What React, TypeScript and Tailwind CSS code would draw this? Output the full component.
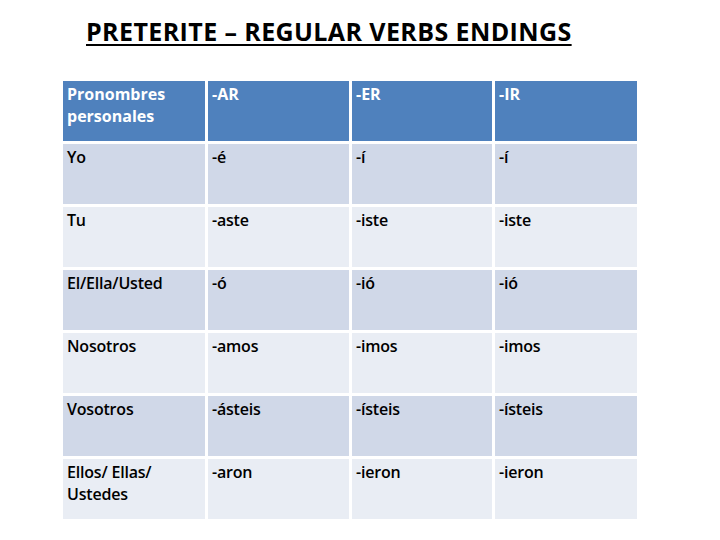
import React from "react";

const rows: string[][] = [
  ["Yo", "-é", "-í", "-í"],
  ["Tu", "-aste", "-iste", "-iste"],
  ["El/Ella/Usted", "-ó", "-ió", "-ió"],
  ["Nosotros", "-amos", "-imos", "-imos"],
  ["Vosotros", "-ásteis", "-ísteis", "-ísteis"],
  ["Ellos/ Ellas/ Ustedes", "-aron", "-ieron", "-ieron"],
];

export default function App() {
  return (
    <div className="w-[720px] h-[540px] bg-white overflow-hidden" style={{ fontFamily: "'Open Sans', 'Liberation Sans', sans-serif" }}>
      <div className="pt-[16px] pl-[86px] h-[81px]">
        <h1 className="text-[25px] leading-[30px] tracking-[0.4px] font-bold text-black underline decoration-[2px] underline-offset-[3px]">
          PRETERITE – REGULAR VERBS ENDINGS
        </h1>
      </div>
      <div className="ml-[63px] grid grid-cols-[142px_141px_140px_142px] gap-[3px] auto-rows-[60px] w-[574px]">
        {["Pronombres personales", "-AR", "-ER", "-IR"].map((h, i) => (
          <div key={i} className="bg-[#4f81bd] text-white font-bold text-[16px] leading-[22px] px-[4px] pt-[2px]">
            {h}
          </div>
        ))}
        {rows.map((r, ri) =>
          r.map((c, ci) => (
            <div
              key={ri + "-" + ci}
              className={(ri % 2 === 0 ? "bg-[#d0d8e8]" : "bg-[#e9edf4]") + " text-black font-semibold text-[16px] leading-[22px] tracking-[-0.2px] px-[4px] pt-[2px]"}
            >
              {c}
            </div>
          ))
        )}
      </div>
    </div>
  );
}
